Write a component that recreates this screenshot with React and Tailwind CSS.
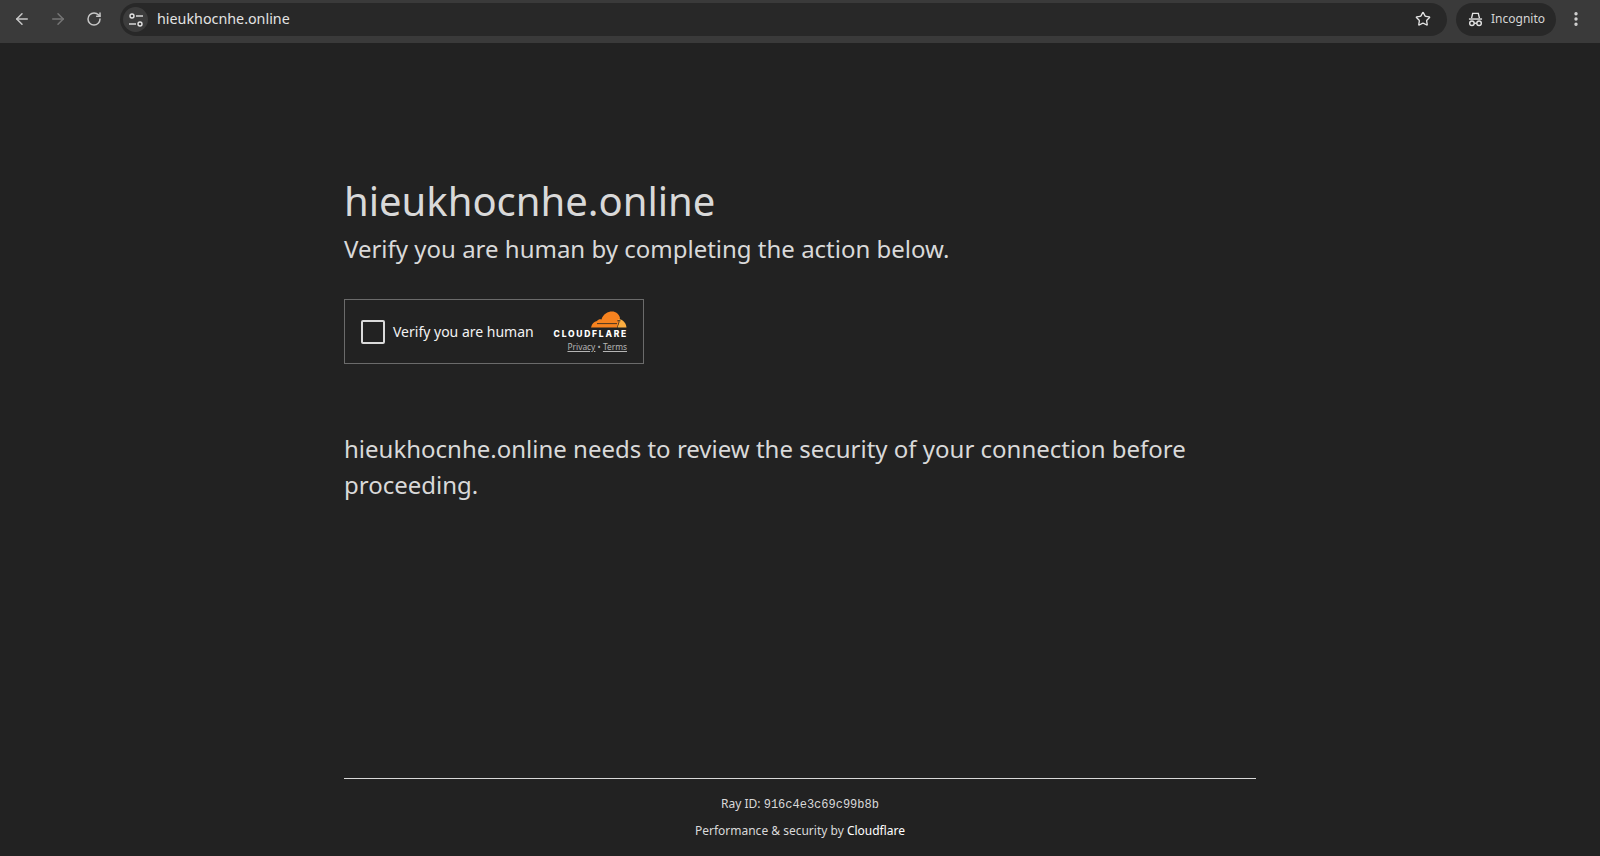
import React from 'react';
import { ArrowLeft, ArrowRight, RotateCw, Star, EllipsisVertical } from 'lucide-react';

const sans = { fontFamily: '"Noto Sans", sans-serif' };

const TuneIcon = () => (
  <svg width="16" height="16" viewBox="0 0 16 16" fill="none" stroke="#e3e3e3" strokeWidth="1.4">
    <circle cx="4" cy="4" r="2" />
    <path d="M8 4h7" />
    <circle cx="12" cy="12" r="2" />
    <path d="M1 12h7" />
  </svg>
);

const IncognitoIcon = () => (
  <svg width="15" height="15" viewBox="0 0 16 16" fill="none" stroke="#e3e3e3" strokeWidth="1.5">
    <path d="M3.8 6.5L5 1.5h6l1.2 5" />
    <path d="M1 7.5h14" />
    <circle cx="4.2" cy="12" r="2.4" />
    <circle cx="11.8" cy="12" r="2.4" />
    <path d="M6.6 12h2.8" />
  </svg>
);

const CloudLogo = () => (
  <svg width="36" height="17" viewBox="0 0 36 17">
    <path d="M0 16.5 C1 12.5 3 10.5 6 10 C7 8.5 9 8 10.5 8.5 C12 3 17 0.5 21 0.5 C25 0.5 28 3 29 7 L26 16.5 Z" fill="#f6821f" />
    <path d="M27 8 C31 8 35 11 35.5 16.5 L26.5 16.5 L28.5 11 Z" fill="#fbad41" />
    <path d="M6 12.6h20" stroke="#222222" strokeWidth="0.8" />
    <path d="M26.4 9.8l3 0" stroke="#222222" strokeWidth="1" />
  </svg>
);

const Toolbar = () => (
  <div className="h-[43px] bg-[#3a3a3a] flex items-start pt-[3px] pl-[13px] pr-[6px]">
    <ArrowLeft className="mt-[7px] w-[18px] h-[18px] text-[#c7c7c7]" strokeWidth={2} />
    <ArrowRight className="mt-[7px] w-[18px] h-[18px] ml-[18px] text-[#757575]" strokeWidth={2} />
    <RotateCw className="mt-[8px] w-[16px] h-[16px] ml-[19px] text-[#c7c7c7]" strokeWidth={2.25} />
    <div className="ml-[18px] h-[33px] w-[1327px] rounded-full bg-[#282828] flex items-center pl-[3px] pr-[16px]">
      <div className="w-[25px] h-[25px] rounded-full bg-[#3c3c3c] flex items-center justify-center">
        <TuneIcon />
      </div>
      <span className="ml-[9px] mb-[2px] text-[14.3px] text-[#e3e3e3]" style={sans}>hieukhocnhe.online</span>
      <Star className="ml-auto mb-[2px] w-[16px] h-[16px] text-[#e3e3e3]" strokeWidth={2} />
    </div>
    <div className="ml-[9px] h-[33px] w-[100px] rounded-full bg-[#282828] flex items-center pl-[12px]">
      <IncognitoIcon />
      <span className="ml-[8px] mb-[2px] text-[12px] text-[#d5d5d5]" style={sans}>Incognito</span>
    </div>
    <EllipsisVertical className="mt-[7px] ml-[11px] w-[18px] h-[18px] text-[#d5d5d5]" strokeWidth={2.5} />
  </div>
);

const Widget = () => (
  <div className="mt-[32px] w-[300px] h-[65px] border border-[#6b6b6b] flex items-center pl-[16px] pr-[16px]">
    <div className="w-[24px] h-[24px] rounded-[2px] border-2 border-[#dadada]" />
    <span className="ml-[8px] text-[14px] text-[#f2f2f2]" style={sans}>Verify you are human</span>
    <div className="ml-auto flex flex-col items-end">
      <CloudLogo />
      <div className="mt-[2px] text-[8.5px] leading-[9px] font-extrabold text-white tracking-[1.75px] mr-[-1px]" style={{ fontFamily: 'Inter, sans-serif' }}>CLOUDFLARE</div>
      <div className="mt-[2px] text-[8.4px] leading-[11px] text-[#b5b5b5]" style={sans}>
        <span className="underline">Privacy</span> • <span className="underline">Terms</span>
      </div>
    </div>
  </div>
);

export default function App() {
  return (
    <div className="h-[856px] bg-[#222222] overflow-hidden flex flex-col" style={sans}>
      <Toolbar />
      <div className="w-[912px] mx-auto flex-1 flex flex-col text-[#d9d9d9]">
        <h1 className="mt-[128px] text-[40px] leading-[60px] font-normal">hieukhocnhe.online</h1>
        <h2 className="text-[24px] leading-[36px] font-normal">Verify you are human by completing the action below.</h2>
        <Widget />
        <p className="mt-[67px] text-[24px] leading-[36px]">
          hieukhocnhe.online needs to review the security of your connection before proceeding.
        </p>
        <div className="mt-auto border-t border-[#d9d9d9] pt-[16px] pb-[16px] text-center text-[12px] leading-[18px] text-[#d9d9d9]">
          <div>Ray ID: <code className="text-[12px]" style={{ fontFamily: '"Liberation Mono", monospace' }}>916c4e3c69c99b8b</code></div>
          <div className="mt-[8px]">Performance &amp; security by <span className="text-white">Cloudflare</span></div>
        </div>
      </div>
    </div>
  );
}
